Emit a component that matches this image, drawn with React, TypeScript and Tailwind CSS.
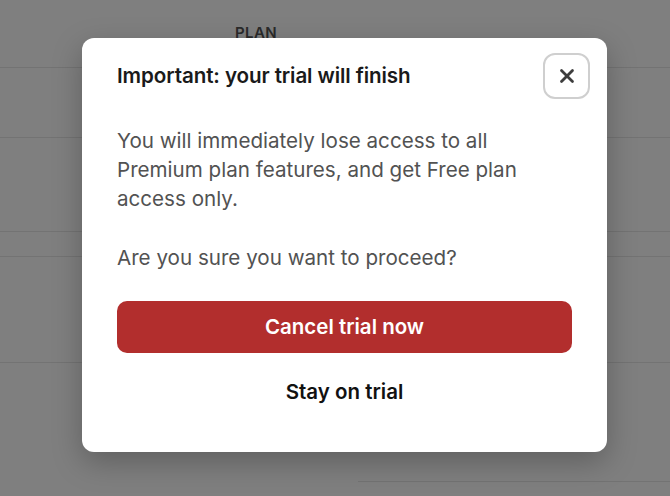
import { X } from "lucide-react";

function BackgroundTable() {
    return (
        <div className="h-[496px] w-full bg-white text-[#545454]">
            {/** Header row */}
            <div className="h-[68px] border-b border-[#e6e6e6] flex">
                <div className="w-[235px]" />
                <div className="pt-[22px] text-[15px] font-semibold tracking-wide">PLAN</div>
            </div>
            <div className="h-[70px] border-b border-[#e6e6e6]" />
            <div className="h-[94px] border-b border-[#e6e6e6]" />
            <div className="h-[25px] border-b border-[#e6e6e6]" />
            <div className="h-[106px] border-b border-[#e6e6e6]" />
            <div className="h-[119px] ml-[358px] border-b border-[#e6e6e6]" />
        </div>
    );
}

function TrialModal() {
    return (
        <div className="w-[525px] bg-white rounded-[12px] shadow-[0_10px_30px_rgba(0,0,0,0.25)] pt-[15px] pb-[34px] pl-[35px] pr-[17px]">
            {/** Header */}
            <div className="flex items-center justify-between">
                <h2 className="text-[20.6px] font-semibold text-[#1a1a1a] tracking-[-0.1px] pt-[1px]">
                    Important: your trial will finish
                </h2>
                <button className="w-[47px] h-[46px] rounded-[12px] border-[2.5px] border-[#cfcfcf] flex items-center justify-center text-[#3d3d3d]">
                    <X size={22} strokeWidth={3} />
                </button>
            </div>

            {/** Body */}
            <div className="pr-[18px]">
                <p className="mt-[27px] text-[20.6px] leading-[29px] text-[#525252]">
                    You will immediately lose access to all Premium plan features, and get Free plan access only.
                </p>
                <p className="mt-[30px] text-[20.6px] leading-[29px] text-[#525252]">
                    Are you sure you want to proceed?
                </p>

                <button className="mt-[29px] w-full h-[52px] rounded-[10px] bg-[#b22e2d] text-white text-[20.5px] font-semibold">
                    Cancel trial now
                </button>
                <button className="mt-[14px] w-full h-[51px] text-[20.5px] font-semibold text-[#111]">
                    Stay on trial
                </button>
            </div>
        </div>
    );
}

export default function App() {
    return (
        <div className="relative w-[670px] h-[496px] overflow-hidden" style={{ fontFamily: "Inter, 'Noto Sans', sans-serif" }}>
            <BackgroundTable />
            <div className="absolute inset-0 bg-black/50 flex items-start pl-[82px] pt-[38px]">
                <TrialModal />
            </div>
        </div>
    );
}
